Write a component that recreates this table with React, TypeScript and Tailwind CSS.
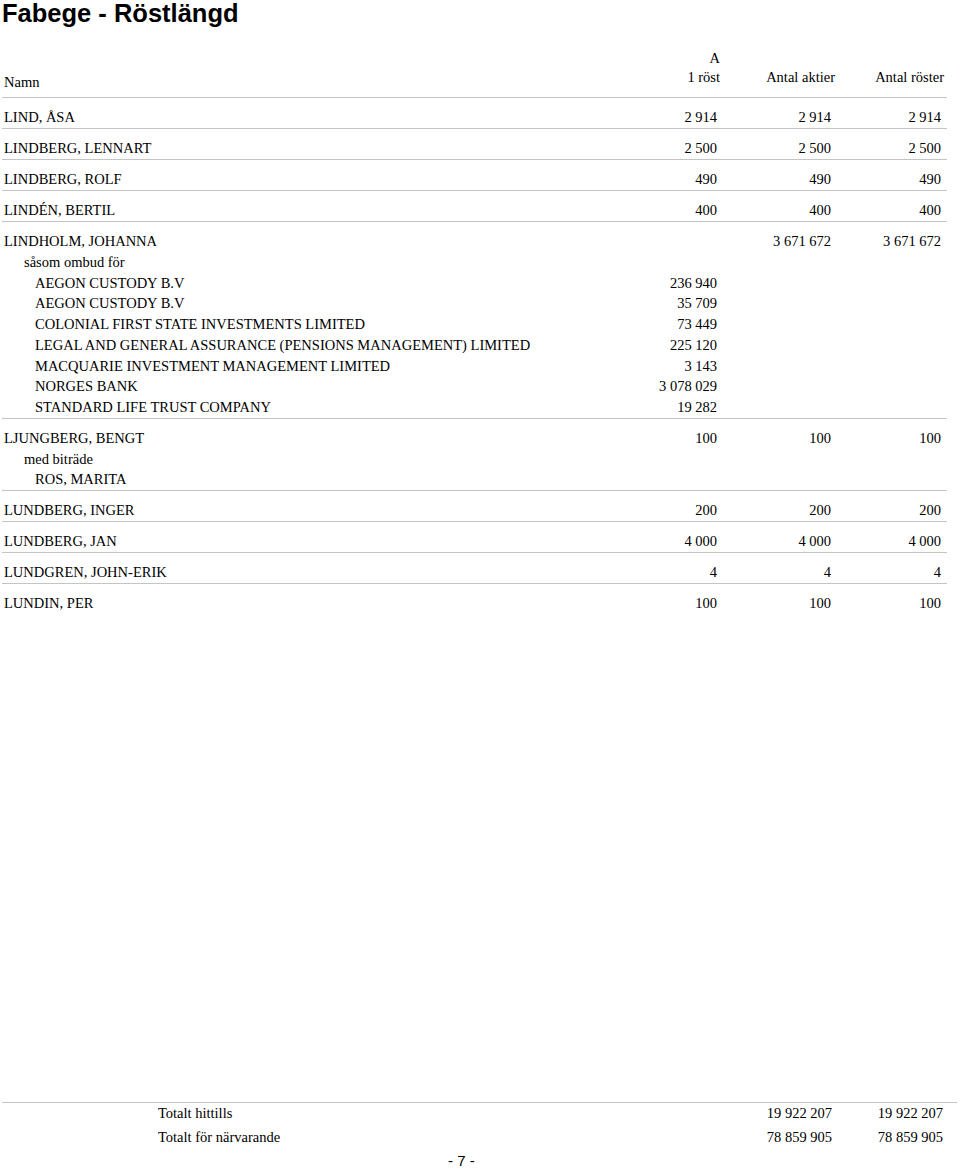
import React from "react";

type Line = { name: string; indent?: 0 | 1 | 2; a?: string; b?: string; c?: string };
type Group = Line[];

const groups: Group[] = [
  [{ name: "LIND, ÅSA", a: "2 914", b: "2 914", c: "2 914" }],
  [{ name: "LINDBERG, LENNART", a: "2 500", b: "2 500", c: "2 500" }],
  [{ name: "LINDBERG, ROLF", a: "490", b: "490", c: "490" }],
  [{ name: "LINDÉN, BERTIL", a: "400", b: "400", c: "400" }],
  [
    { name: "LINDHOLM, JOHANNA", b: "3 671 672", c: "3 671 672" },
    { name: "såsom ombud för", indent: 1 },
    { name: "AEGON CUSTODY B.V", indent: 2, a: "236 940" },
    { name: "AEGON CUSTODY B.V", indent: 2, a: "35 709" },
    { name: "COLONIAL FIRST STATE INVESTMENTS LIMITED", indent: 2, a: "73 449" },
    { name: "LEGAL AND GENERAL ASSURANCE (PENSIONS MANAGEMENT) LIMITED", indent: 2, a: "225 120" },
    { name: "MACQUARIE INVESTMENT MANAGEMENT LIMITED", indent: 2, a: "3 143" },
    { name: "NORGES BANK", indent: 2, a: "3 078 029" },
    { name: "STANDARD LIFE TRUST COMPANY", indent: 2, a: "19 282" },
  ],
  [
    { name: "LJUNGBERG, BENGT", a: "100", b: "100", c: "100" },
    { name: "med biträde", indent: 1 },
    { name: "ROS, MARITA", indent: 2 },
  ],
  [{ name: "LUNDBERG, INGER", a: "200", b: "200", c: "200" }],
  [{ name: "LUNDBERG, JAN", a: "4 000", b: "4 000", c: "4 000" }],
  [{ name: "LUNDGREN, JOHN-ERIK", a: "4", b: "4", c: "4" }],
  [{ name: "LUNDIN, PER", a: "100", b: "100", c: "100" }],
];

function Row({ line }: { line: Line }) {
  const ind = line.indent === 1 ? "pl-[20px]" : line.indent === 2 ? "pl-[31px]" : "";
  return (
    <div className="grid grid-cols-[1fr_120px_115px_109px] leading-[20.7px]">
      <div className={"whitespace-nowrap " + ind}>{line.name}</div>
      <div className="text-right pr-[3px] whitespace-nowrap">{line.a ?? ""}</div>
      <div className="text-right pr-[4px] whitespace-nowrap">{line.b ?? ""}</div>
      <div className="text-right pr-[3px] whitespace-nowrap">{line.c ?? ""}</div>
    </div>
  );
}

export default function App() {
  return (
    <div
      className="h-[1169px] w-[960px] bg-white text-black flex flex-col overflow-hidden"
      style={{ fontFamily: '"Liberation Serif", "Times New Roman", serif' }}
    >
      <h1
        className="text-[25.5px] leading-[27px] font-bold pl-[2px]"
        style={{ fontFamily: '"Liberation Sans", Arial, sans-serif' }}
      >
        Fabege - Röstlängd
      </h1>

      <div className="text-[14.5px]">
        <div className="mt-[22px] ml-[2px] w-[945px] pl-[2px] pr-[3px] border-b border-[#c4c4c4] grid grid-cols-[1fr_120px_115px_109px] items-end">
          <div className="leading-[20.7px] pb-[4px]">Namn</div>
          <div className="text-right leading-[19px] pb-[10px]">
            <div>A</div>
            <div>1 röst</div>
          </div>
          <div className="text-right leading-[19px] pb-[10px]">Antal aktier</div>
          <div className="text-right leading-[19px] pb-[10px]">Antal röster</div>
        </div>

        {groups.map((g, i) => (
          <div
            key={i}
            className={
              "ml-[2px] w-[945px] pl-[2px] pr-[3px] pt-[9.3px] " +
              (i < groups.length - 1 ? "border-b border-[#c4c4c4]" : "")
            }
          >
            {g.map((l, j) => (
              <Row key={j} line={l} />
            ))}
          </div>
        ))}
      </div>

      <div className="mt-auto text-[14.5px]">
        <div className="ml-[2px] w-[955px] border-t border-[#c4c4c4] pl-[156px] pr-[14px]">
          <div className="grid grid-cols-[1fr_112px_111px] leading-[20px]">
            <div>Totalt hittills</div>
            <div className="text-right">19 922 207</div>
            <div className="text-right">19 922 207</div>
          </div>
          <div className="grid grid-cols-[1fr_112px_111px] leading-[20px] mt-[4px]">
            <div>Totalt för närvarande</div>
            <div className="text-right">78 859 905</div>
            <div className="text-right">78 859 905</div>
          </div>
        </div>
        <div
          className="mt-[5px] ml-[448px] text-[15px] leading-[17px] whitespace-pre"
          style={{ fontFamily: '"Liberation Sans", Arial, sans-serif' }}
        >
          - 7 -
        </div>
      </div>
    </div>
  );
}
